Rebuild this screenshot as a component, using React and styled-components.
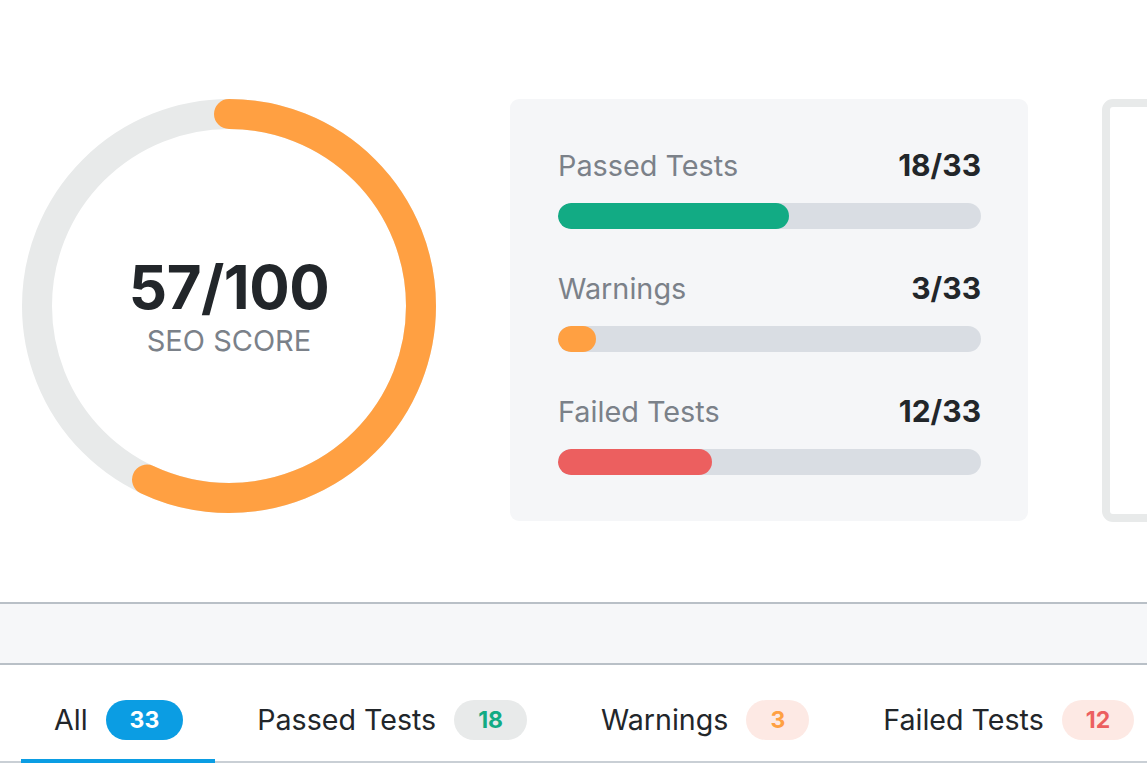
import React from "react";
import styled, { createGlobalStyle } from "styled-components";

const Global = createGlobalStyle`
  html, body { margin: 0; padding: 0; background: #ffffff; }
  body { font-family: Inter, "Noto Sans", "Liberation Sans", sans-serif; -webkit-font-smoothing: antialiased; }
  * { box-sizing: border-box; }
`;

const Page = styled.div`
  width: 1147px;
  height: 763px;
  overflow: hidden;
  background: #ffffff;
`;

const Hero = styled.section`
  display: flex;
  align-items: flex-start;
  gap: 74px;
  height: 602px;
  padding: 99px 0 0 22px;
`;

const Gauge = styled.div`
  display: grid;
  place-items: center;
  width: 414px;
  height: 414px;
  flex-shrink: 0;
  & > * { grid-area: 1 / 1; }
`;

const GaugeText = styled.div`
  display: flex;
  flex-direction: column;
  align-items: center;
`;

const Score = styled.div`
  font-size: 60px;
  line-height: 66px;
  font-weight: 700;
  color: #22262a;
  letter-spacing: -0.5px;
`;

const ScoreLabel = styled.div`
  font-size: 29px;
  line-height: 36px;
  color: #7b8189;
  margin-top: 3px;
`;

const StatsCard = styled.div`
  width: 518px;
  flex-shrink: 0;
  background: #f5f6f8;
  border-radius: 9px;
  padding: 49px 47px 46px 48px;
  display: flex;
  flex-direction: column;
  gap: 42px;
`;

const StatRow = styled.div`
  display: flex;
  flex-direction: column;
  gap: 21px;
`;

const StatHead = styled.div`
  display: flex;
  justify-content: space-between;
  align-items: center;
  height: 34px;
`;

const StatLabel = styled.span`
  font-size: 28.8px;
  color: #7b8189;
`;

const StatValue = styled.span`
  font-size: 30px;
  font-weight: 700;
  color: #22262a;
`;

const Track = styled.div`
  height: 26px;
  border-radius: 13px;
  background: #d9dde3;
  overflow: hidden;
  display: flex;
`;

const Fill = styled.div`
  height: 100%;
  border-radius: 13px;
  background: ${(p) => p.$color};
`;

const GhostCard = styled.div`
  width: 320px;
  height: 423px;
  flex-shrink: 0;
  border: 8px solid #e8eaea;
  border-radius: 11px;
  background: #ffffff;
`;

const Band = styled.div`
  height: 63px;
  background: #f6f7f9;
  border-top: 2px solid #b9c0c7;
  border-bottom: 2px solid #b9c0c7;
`;

const TabBar = styled.nav`
  display: flex;
  gap: 9px;
  padding-left: 21px;
  box-shadow: inset 0 -2px 0 #c9cfd5;
`;

const Tab = styled.div`
  display: flex;
  flex-shrink: 0;
  align-items: center;
  gap: 18px;
  padding: 35px 32px 19px 33px;
  white-space: nowrap;
  border-bottom: 4px solid ${(p) => (p.$active ? "#0b9de3" : "transparent")};
`;

const TabLabel = styled.span`
  font-size: 28.6px;
  line-height: 40px;
  color: #22262a;
`;

const Badge = styled.span`
  display: inline-flex;
  align-items: center;
  justify-content: center;
  height: 40px;
  min-width: 61px;
  padding: 0 24px;
  border-radius: 20px;
  font-size: 23px;
  font-weight: 700;
  background: ${(p) => p.$bg};
  color: ${(p) => p.$fg};
`;

const R = 192;
const C = 2 * Math.PI * R;

function ScoreGauge({ value }) {
  const len = (value / 100) * C;
  return (
    <Gauge>
      <svg width="414" height="414" viewBox="0 0 414 414">
        <circle cx="207" cy="207" r={R} fill="none" stroke="#e8eaea" strokeWidth="30" />
        <circle
          cx="207"
          cy="207"
          r={R}
          fill="none"
          stroke="#ffa042"
          strokeWidth="30"
          strokeLinecap="round"
          strokeDasharray={`${len} ${C}`}
          transform="rotate(-90 207 207)"
        />
      </svg>
      <GaugeText>
        <Score>{value}/100</Score>
        <ScoreLabel>SEO SCORE</ScoreLabel>
      </GaugeText>
    </Gauge>
  );
}

const stats = [
  { label: "Passed Tests", n: 18, color: "#12ab84" },
  { label: "Warnings", n: 3, color: "#ffa042" },
  { label: "Failed Tests", n: 12, color: "#ec5f5f" },
];

const tabs = [
  { label: "All", n: 33, bg: "#0b9de3", fg: "#ffffff", active: true },
  { label: "Passed Tests", n: 18, bg: "#e8eaea", fg: "#12ab84" },
  { label: "Warnings", n: 3, bg: "#fde9e4", fg: "#ffa042" },
  { label: "Failed Tests", n: 12, bg: "#fde9e4", fg: "#ec5f5f" },
];

export default function App() {
  const total = 33;
  return (
    <>
      <Global />
      <Page>
        <Hero>
          <ScoreGauge value={57} />
          <StatsCard>
            {stats.map((s) => (
              <StatRow key={s.label}>
                <StatHead>
                  <StatLabel>{s.label}</StatLabel>
                  <StatValue>
                    {s.n}/{total}
                  </StatValue>
                </StatHead>
                <Track>
                  <Fill $color={s.color} style={{ width: `${(s.n / total) * 100}%` }} />
                </Track>
              </StatRow>
            ))}
          </StatsCard>
          <GhostCard />
        </Hero>
        <Band />
        <TabBar>
          {tabs.map((t) => (
            <Tab key={t.label} $active={t.active}>
              <TabLabel>{t.label}</TabLabel>
              <Badge $bg={t.bg} $fg={t.fg}>
                {t.n}
              </Badge>
            </Tab>
          ))}
        </TabBar>
      </Page>
    </>
  );
}
